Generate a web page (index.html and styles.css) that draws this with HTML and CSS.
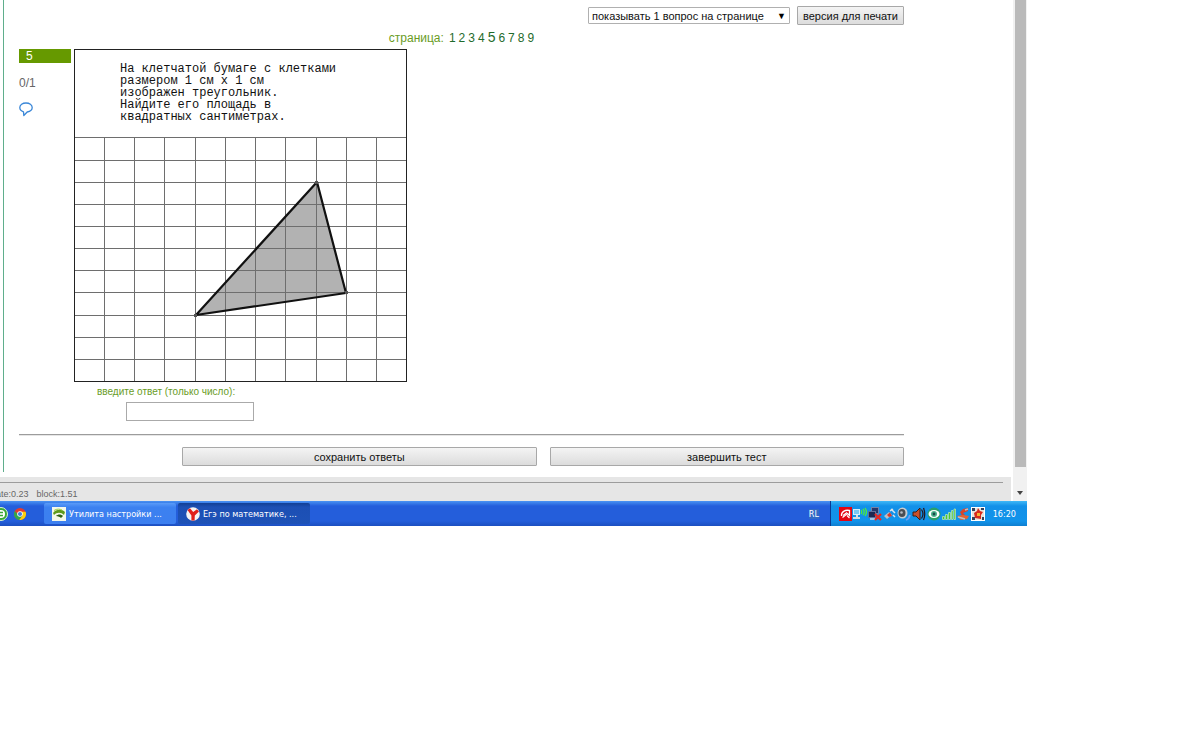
FILE: index.html
```html
<!DOCTYPE html>
<html lang="ru">

<head>
    <meta charset="UTF-8" />
    <meta name="viewport" content="width=device-width, initial-scale=1.0" />
    <title>Егэ по математике</title>
    <link rel="stylesheet" href="styles.css">
</head>

<body>
    <div class="desktop">
        <div class="browser">
            <div class="view">
                <main class="test">
                    <form class="content">
                        <div class="toolbar">
                            <div class="select-wrap">
                                <select class="per-page" aria-label="Вопросов на странице">
                                    <option>показывать 1 вопрос на странице</option>
                                </select>
                            </div>
                            <button type="button" class="btn">версия для печати</button>
                        </div>

                        <nav class="pages">
                            <span>страница:</span>
                            <a href="#">1</a>
                            <a href="#">2</a>
                            <a href="#">3</a>
                            <a href="#">4</a>
                            <a href="#" class="current">5</a>
                            <a href="#">6</a>
                            <a href="#">7</a>
                            <a href="#">8</a>
                            <a href="#">9</a>
                        </nav>

                        <div class="question">
                            <div class="info">
                                <div class="number">5</div>
                                <div class="score">0/1</div>
                                <svg class="comment" width="14" height="15" viewBox="0 0 14 15">
                                    <path d="M4.500 9.800C2 9 .8 7.500 .8 5.500C.8 3 3.500 1 7 1S13.200 3 13.200 5.500C13.200 8 10.500 9.600 8.200 10L4.800 13.500Z" fill="#fff" stroke="#3a87d8" stroke-width="1.300" stroke-linejoin="round" />
                                </svg>
                            </div>

                            <div class="task">
                                <div class="figure">
                                    <p class="figure-text">На клетчатой бумаге с клетками<br>размером 1 см x 1 см<br>изображен треугольник.<br>Найдите его площадь в<br>квадратных сантиметрах.</p>
                                    <svg class="grid" width="331" height="244" viewBox="0 0 331 244">
                                        <path d="M121 178L242 45L271 156Z" fill="#b2b2b2" />
                                        <path d="M29.500 0V244M59.500 0V244M89.500 0V244M120.500 0V244M150.500 0V244M180.500 0V244M210.500 0V244M241.500 0V244M271.500 0V244M301.500 0V244M0 .5H331M0 23.500H331M0 45.500H331M0 67.500H331M0 89.500H331M0 111.500H331M0 133.500H331M0 155.500H331M0 178.500H331M0 200.500H331M0 222.500H331" fill="none" stroke="#6e6e6e" />
                                        <path d="M121 178L242 45L271 156Z" fill="none" stroke="#111" stroke-width="2.200" stroke-linejoin="round" />
                                        <path d="M119 177h3v3h-3zM240 44h3v3h-3zM270 154h3v3h-3z" fill="#555" />
                                    </svg>
                                </div>
                                <label class="answer-label" for="answer">введите ответ (только число):</label>
                                <input class="answer" id="answer" type="text" />
                            </div>
                        </div>

                        <hr class="line">

                        <div class="actions">
                            <button type="button" class="btn">сохранить ответы</button>
                            <button type="button" class="btn">завершить тест</button>
                        </div>
                    </form>
                </main>

                <footer class="footer">
                    <hr class="line">
                    <div class="stats">
                        <span>ate:0.23</span>
                        <span>block:1.51</span>
                    </div>
                </footer>
            </div>

            <div class="scrollbar">
                <div class="thumb"></div>
                <div class="arrow"></div>
            </div>
        </div>

        <div class="taskbar">
            <div class="quick">
                <svg width="8" height="14" viewBox="6 0 8 14">
                    <circle cx="7" cy="7" r="6.500" fill="#39a935" stroke="#d9f5d0" />
                    <circle cx="7" cy="7" r="4" fill="#fff" />
                    <path d="M5 5.500h4M5 8.500h4" stroke="#39a935" stroke-width="1.500" />
                </svg>
                <svg width="12" height="12" viewBox="0 0 12 12">
                    <circle cx="6" cy="6" r="6" fill="#e33b2e" />
                    <path d="M.8 3A6 6 0 0 0 5.300 12L8.600 7.500L6 6H3.400Z" fill="#2fa84c" />
                    <path d="M5.300 12A6 6 0 0 0 11.600 3.800H6L8.600 7.500Z" fill="#fbd10c" />
                    <circle cx="6" cy="6" r="2.800" fill="#fff" />
                    <circle cx="6" cy="6" r="2.100" fill="#3f7fe0" />
                </svg>
            </div>

            <button type="button" class="window">
                <svg width="14" height="14" viewBox="0 0 14 14">
                    <rect width="14" height="14" fill="#f4f8ea" />
                    <path d="M1 6C4 2 10 2 13 5L12 8C9 5 5 5 2 8Z" fill="#5d9b1c" />
                    <path d="M4 9C6 7 9 7 11 9L9 11C8 9.500 6 9.500 4 9Z" fill="#2f6312" />
                    <path d="M2 3.500C5 1.500 8 2 10 3" fill="none" stroke="#9fcb45" />
                </svg>
                <span>Утилита настройки ...</span>
            </button>
            <button type="button" class="window active">
                <svg width="14" height="14" viewBox="0 0 14 14">
                    <circle cx="7" cy="7" r="6.800" fill="#f4f4f4" />
                    <path d="M1.500 3L4 1.200L7.200 5L11 2.200L13 4.500L8.800 8.500L8.600 13.500H5.400V8.500Z" fill="#e0201b" />
                </svg>
                <span>Егэ по математике, ...</span>
            </button>

            <span class="lang">RL</span>

            <div class="tray">
                <svg width="13" height="14" viewBox="0 0 13 14">
                    <rect width="13" height="14" fill="#e30613" />
                    <path d="M2.500 9C2 5 6 2.500 10.500 3.500V8.500L8.500 6.500L3.500 10.500" fill="none" stroke="#fff" stroke-width="1.300" />
                    <path d="M4 8.500L8 5.500M8 8.500L10.500 11" fill="none" stroke="#fff" stroke-width="1.200" />
                </svg>
                <svg width="14" height="14" viewBox="0 0 14 14">
                    <rect x=".5" y="2.500" width="6" height="5" fill="#78c9f5" stroke="#d5eefb" />
                    <path d="M3 8h2v2h2v2H0v-2h3z" fill="#d5dce2" />
                    <path d="M8 3q1.500 2 0 4M10 2q2.500 3 0 6M12 1q3 4 0 8" fill="none" stroke="#53ee36" stroke-width="1.200" />
                </svg>
                <svg width="14" height="14" viewBox="0 0 14 14">
                    <rect x="3.500" y=".5" width="7" height="6" fill="#26376a" stroke="#7282a8" />
                    <rect x=".5" y="4.500" width="7" height="6" fill="#1d2852" stroke="#5f719c" />
                    <path d="M2 12h5" stroke="#cfd8e5" stroke-width="1.500" />
                    <path d="M7 7L13 13M13 7L7 13" stroke="#e8261f" stroke-width="2.200" />
                </svg>
                <svg width="13" height="14" viewBox="0 0 13 14">
                    <path d="M1 9L6 5L9 8L4 12Z" fill="#b9c0ca" />
                    <path d="M4 8L7 5.500L9 9L6 10Z" fill="#d83a2d" />
                    <path d="M8 2L12 6M7 4l3-2M10 8l2 2" stroke="#dce4ec" stroke-width="1.500" />
                </svg>
                <svg width="14" height="14" viewBox="0 0 14 14">
                    <ellipse cx="5.500" cy="6" rx="5" ry="5.500" fill="#c8ccd0" />
                    <ellipse cx="5" cy="6" rx="3.500" ry="4" fill="#4a4e54" />
                    <circle cx="4.500" cy="5.500" r="1.300" fill="#b7bcc2" />
                    <path d="M9 13q3-1 4-5" fill="none" stroke="#6d9df0" stroke-width="1.800" />
                </svg>
                <svg width="14" height="14" viewBox="0 0 14 14">
                    <path d="M1 5h3l4-4v12L4 9H1z" fill="#c9502b" stroke="#3c1c14" />
                    <path d="M9.500 2.500q3 4.500 0 9M11.500 1q2.500 6 0 12" fill="none" stroke="#24141c" stroke-width="1.200" />
                </svg>
                <svg width="14" height="14" viewBox="0 0 14 14">
                    <circle cx="7" cy="7" r="6.500" fill="#28a06d" />
                    <ellipse cx="7" cy="7" rx="5.500" ry="4" fill="#fff" />
                    <circle cx="7" cy="7" r="3" fill="#4ab08a" />
                    <circle cx="7" cy="7" r="1.400" fill="#174a4a" />
                </svg>
                <svg width="14" height="14" viewBox="0 0 14 14">
                    <path d="M.5 12.500v-3h2v3zM3.500 12.500v-5h2v5zM6.500 12.500v-7h2v7zM9.500 12.500v-9h1.500v9zM12 12.500V2h1.500v10.500z" fill="#50c52e" stroke="#d9f5c8" stroke-width=".6" />
                </svg>
                <svg width="13" height="14" viewBox="0 0 13 14">
                    <path d="M11 1L6 2L3 5L5 9L8 8L6 6L11 4Z" fill="#d9432a" />
                    <path d="M0 9L6 8L12 9L10 12L4 13Z" fill="#e8612f" />
                    <path d="M1 10L8 12M8 3l3-1" stroke="#b9c1c8" stroke-width="1.400" />
                </svg>
                <svg width="14" height="14" viewBox="0 0 14 14">
                    <rect x=".5" y=".5" width="13" height="13" fill="#e6e4dc" stroke="#fff" />
                    <path d="M1 1h3v3H1zM10 1h3v2h-3zM1 10h3v3H1zM11 10h2v3h-2z" fill="#33415c" />
                    <path d="M3 6L6 4L7 1L9 4L12 5L10 8L10 12L4 11Z" fill="#d6291c" />
                    <path d="M6 6h3v3H6z" fill="#f2b233" />
                </svg>
                <span class="clock">16:20</span>
            </div>
        </div>
    </div>
</body>

</html>
```
FILE: styles.css
```css
* {
    box-sizing: border-box;
}

body {
    margin: 0;
    padding-right: 173px;
    background-color: #fff;
    font-family: "Liberation Sans", Arial, sans-serif;
    font-size: 12px;
    color: #222;
}

.desktop {
    overflow: hidden;
}

.browser {
    display: flex;
}

.view {
    flex: 1;
    min-width: 0;
}

.test {
    margin: 0 0 5px 3px;
    padding: 6px 109px 6px 15px;
    border-left: 1px solid #5fae8c;
}

.toolbar {
    display: flex;
    justify-content: flex-end;
    align-items: center;
    gap: 7px;
}

.select-wrap {
    position: relative;
}

.select-wrap::after {
    content: "▼";
    position: absolute;
    right: 4px;
    top: 5px;
    font-size: 9px;
    line-height: 8px;
    color: #000;
    pointer-events: none;
}

.per-page {
    display: block;
    width: 202px;
    height: 17px;
    padding: 0 3px;
    border: 1px solid #b0b0b0;
    border-radius: 1px;
    background-color: #fff;
    font-family: inherit;
    font-size: 11px;
    color: #111;
    appearance: none;
}

.btn {
    height: 19px;
    padding: 0 5px;
    border: 1px solid #a8a8a8;
    border-radius: 1px;
    background: linear-gradient(#f4f4f4, #dcdcdc);
    font-family: inherit;
    font-size: 11px;
    color: #111;
}

.pages {
    display: flex;
    justify-content: center;
    align-items: baseline;
    gap: 3px;
    height: 24px;
    padding-top: 4px;
    line-height: 16px;
    color: #6a9c1f;
}

.pages span {
    margin-right: 2px;
}

.pages a {
    color: #1f6b2c;
    text-decoration: none;
}

.pages .current {
    font-size: 14px;
}

.question {
    display: flex;
    gap: 3px;
}

.info {
    width: 52px;
}

.number {
    height: 14px;
    padding-left: 7px;
    background-color: #669900;
    line-height: 14px;
    color: #fff;
}

.score {
    margin: 12px 0 11px;
    line-height: 16px;
    color: #666;
}

.comment {
    display: block;
}

.task {
    display: flex;
    flex-direction: column;
    align-items: flex-start;
}

.figure {
    border: 1px solid #222;
}

.figure-text {
    height: 87px;
    margin: 0;
    padding: 13px 0 0 45px;
    font-family: "Liberation Mono", "Courier New", monospace;
    font-size: 12px;
    line-height: 12px;
    color: #111;
}

.grid {
    display: block;
}

.answer-label {
    margin: 3px 0 3px 23px;
    font-size: 10px;
    line-height: 14px;
    color: #6a9c1f;
}

.answer {
    width: 128px;
    height: 19px;
    margin-left: 52px;
    padding: 0 3px;
    border: 1px solid #aaa;
    font-family: inherit;
    font-size: 11px;
}

.line {
    height: 2px;
    margin: 0;
    border: 0;
    border-top: 1px solid #9c9c9c;
    border-bottom: 1px solid #e6e6e6;
}

.question + .line {
    margin: 13px 0 11px;
}

.actions {
    display: flex;
    gap: 13px;
    padding-left: 163px;
}

.actions .btn {
    flex: 1;
}

.footer {
    height: 24px;
    margin-right: 2px;
    padding: 5px 8px 0 0;
    background-color: #e6e6e6;
}

/* the first counter runs off the left edge */
.stats {
    display: flex;
    gap: 8px;
    margin: 5px 0 0 -4px;
    font-size: 9px;
    line-height: 10px;
    color: #666;
}

.scrollbar {
    display: flex;
    flex-direction: column;
    justify-content: space-between;
    align-items: center;
    width: 14px;
    padding-bottom: 6px;
    background-color: #f1f1f1;
}

.thumb {
    flex: 1;
    width: 11px;
    margin-bottom: 24px;
    background-color: #bababa;
}

.arrow {
    border: 3px solid transparent;
    border-top: 4px solid #444;
    border-bottom: 0;
}

.taskbar {
    display: flex;
    align-items: stretch;
    height: 25px;
    background: linear-gradient(#4a93f3, #245edb 20%, #245edb 80%, #1c4fc0);
    font-family: "DejaVu Sans Condensed", "DejaVu Sans", sans-serif;
    font-size: 9px;
    color: #fff;
}

.taskbar svg {
    flex-shrink: 0;
}

.quick {
    display: flex;
    align-items: center;
    gap: 6px;
    width: 44px;
}

.window {
    display: flex;
    align-items: center;
    gap: 3px;
    width: 132px;
    margin: 2px 2px 2px 0;
    padding: 0 8px;
    border: 0;
    border-radius: 2px;
    background: linear-gradient(#5a9bf8, #3c81f0 20%, #3c7ff0);
    font: inherit;
    color: #fff;
    white-space: nowrap;
}

.window.active {
    background: linear-gradient(#123f94, #1c4fb4 20%, #1e52b7);
}

.lang {
    align-self: center;
    margin: 0 11px 0 auto;
    background-color: #316ac5;
}

.tray {
    display: flex;
    align-items: center;
    gap: 1px;
    width: 197px;
    padding: 0 11px 0 8px;
    border-left: 1px solid #0b3a91;
    background: linear-gradient(#3fb8f7, #1290e8 20%, #1193ea 80%, #0f7fd0);
}

.clock {
    margin-left: auto;
}
```
